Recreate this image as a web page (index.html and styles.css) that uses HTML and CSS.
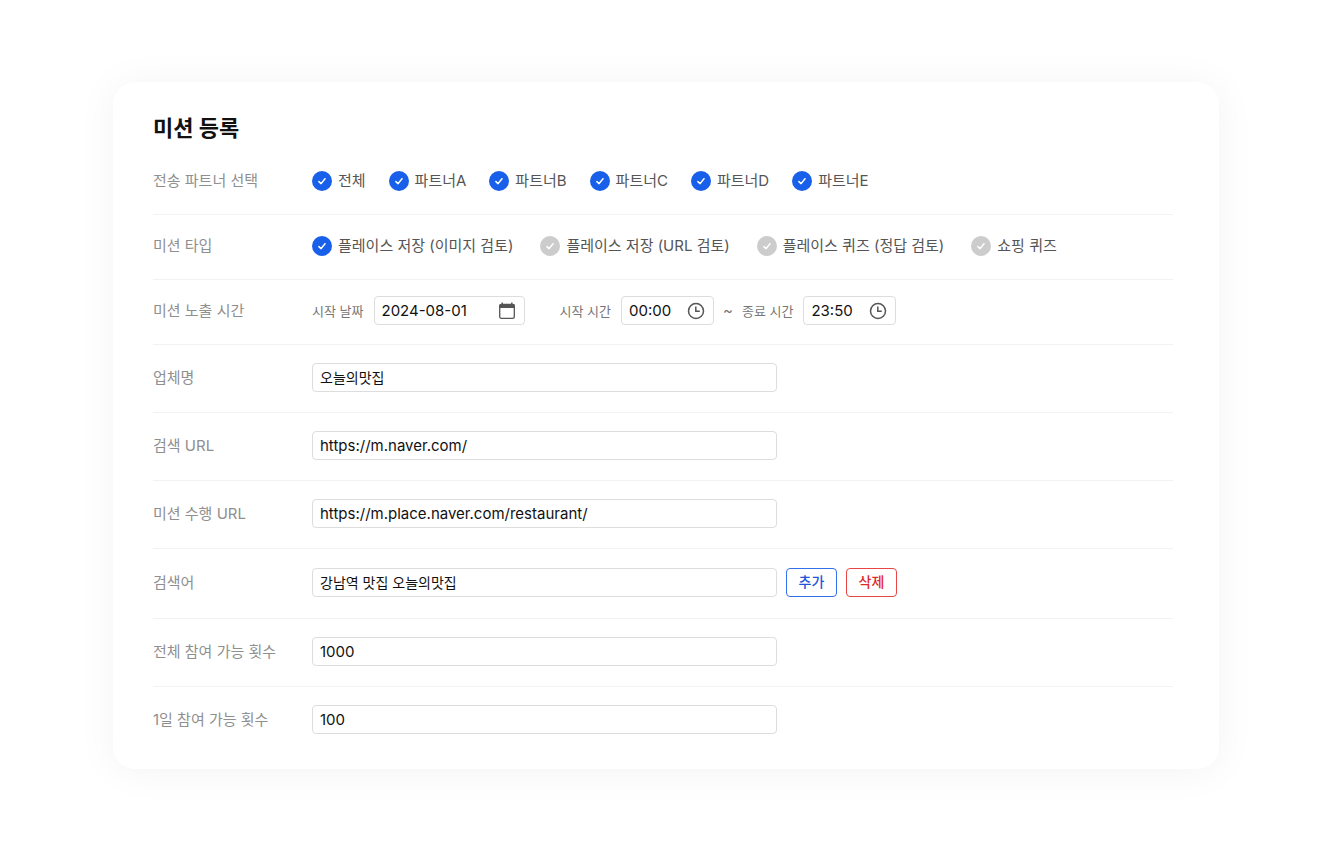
FILE: index.html
```html
<!DOCTYPE html>
<html lang="ko">
<head>
<meta charset="utf-8">
<meta name="viewport" content="width=device-width, initial-scale=1">
<title>미션 등록</title>
<link rel="stylesheet" href="styles.css">
</head>
<body>
<svg class="sprite" aria-hidden="true">
  <symbol id="check" viewBox="0 0 20 20"><path d="M6.9 10.6l2.2 2 3.9-4.9" fill="none" stroke="#fff" stroke-width="1.5" stroke-linecap="round" stroke-linejoin="round"/></symbol>
  <symbol id="calendar" viewBox="0 0 18 18"><path d="M4.2 .6v2M13.8 .6v2" stroke="#555" stroke-width="1.4"/><rect x="1.7" y="2.5" width="14.6" height="13.8" rx="1.6" fill="none" stroke="#555" stroke-width="1.3"/><path d="M1.2 3.6q0-1.6 1.6-1.6h12.4q1.6 0 1.6 1.6v2.3H1.2z" fill="#555"/></symbol>
  <symbol id="clock" viewBox="0 0 18 18"><circle cx="9" cy="9" r="7.5" fill="none" stroke="#555" stroke-width="1.5"/><path d="M8.8 4.4v4.9h4" fill="none" stroke="#555" stroke-width="1.5"/></symbol>
</svg>
<main class="page">
  <form class="card">
    <h1 class="title">미션 등록</h1>

    <div class="row row-compact" role="group" aria-labelledby="partners">
      <span class="label" id="partners">전송 파트너 선택</span>
      <div class="choices">
        <label class="choice"><span class="mark"><input type="checkbox" checked><svg><use href="#check"/></svg></span>전체</label>
        <label class="choice"><span class="mark"><input type="checkbox" checked><svg><use href="#check"/></svg></span>파트너A</label>
        <label class="choice"><span class="mark"><input type="checkbox" checked><svg><use href="#check"/></svg></span>파트너B</label>
        <label class="choice"><span class="mark"><input type="checkbox" checked><svg><use href="#check"/></svg></span>파트너C</label>
        <label class="choice"><span class="mark"><input type="checkbox" checked><svg><use href="#check"/></svg></span>파트너D</label>
        <label class="choice"><span class="mark"><input type="checkbox" checked><svg><use href="#check"/></svg></span>파트너E</label>
      </div>
    </div>

    <div class="row row-compact" role="radiogroup" aria-labelledby="types">
      <span class="label" id="types">미션 타입</span>
      <div class="choices choices-wide">
        <label class="choice"><span class="mark"><input type="radio" name="type" checked><svg><use href="#check"/></svg></span>플레이스 저장 (이미지 검토)</label>
        <label class="choice"><span class="mark"><input type="radio" name="type"><svg><use href="#check"/></svg></span>플레이스 저장 (URL 검토)</label>
        <label class="choice"><span class="mark"><input type="radio" name="type"><svg><use href="#check"/></svg></span>플레이스 퀴즈 (정답 검토)</label>
        <label class="choice"><span class="mark"><input type="radio" name="type"><svg><use href="#check"/></svg></span>쇼핑 퀴즈</label>
      </div>
    </div>

    <div class="row row-compact" role="group" aria-labelledby="exposure">
      <span class="label" id="exposure">미션 노출 시간</span>
      <div class="period">
        <label class="when when-date">시작 날짜
          <span class="picker picker-date"><input type="text" value="2024-08-01"><svg class="picker-icon"><use href="#calendar"/></svg></span>
        </label>
        <label class="when">시작 시간
          <span class="picker"><input type="text" value="00:00"><svg class="picker-icon"><use href="#clock"/></svg></span>
        </label>
        <span class="tilde">~</span>
        <label class="when">종료 시간
          <span class="picker"><input type="text" value="23:50"><svg class="picker-icon"><use href="#clock"/></svg></span>
        </label>
      </div>
    </div>

    <div class="row">
      <label class="label" for="company">업체명</label>
      <input class="field field-ko" id="company" type="text" value="오늘의맛집">
    </div>
    <div class="row">
      <label class="label" for="search-url">검색 URL</label>
      <input class="field" id="search-url" type="url" value="https://m.naver.com/">
    </div>
    <div class="row">
      <label class="label" for="mission-url">미션 수행 URL</label>
      <input class="field" id="mission-url" type="url" value="https://m.place.naver.com/restaurant/">
    </div>
    <div class="row row-actions">
      <label class="label" for="keyword">검색어</label>
      <input class="field field-ko" id="keyword" type="text" value="강남역 맛집 오늘의맛집">
      <div class="actions">
        <button class="button button-add" type="button">추가</button>
        <button class="button button-delete" type="button">삭제</button>
      </div>
    </div>
    <div class="row">
      <label class="label" for="total">전체 참여 가능 횟수</label>
      <input class="field" id="total" type="text" inputmode="numeric" value="1000">
    </div>
    <div class="row">
      <label class="label" for="daily">1일 참여 가능 횟수</label>
      <input class="field" id="daily" type="text" inputmode="numeric" value="100">
    </div>
  </form>
</main>
</body>
</html>
```
FILE: styles.css
```css
* {
  box-sizing: border-box;
}

body {
  margin: 0;
  background: #fff;
  color: #111;
  font-family: Inter, "Noto Sans CJK KR", sans-serif;
  font-size: 15px;
  line-height: 24px;
}

input,
button {
  font: inherit;
  color: inherit;
}

.sprite {
  display: none;
}

.page {
  padding: 82px 110px 84px 113px;
}

.card {
  padding: 30px 46px 15px 40px;
  border-radius: 22px;
  background: #fff;
  box-shadow: 0 2px 40px rgba(0, 0, 0, 0.05);
}

.title {
  margin: 0 0 6px;
  font-size: 22px;
  font-weight: 700;
  line-height: 32px;
}

.row {
  display: flex;
  align-items: center;
  padding: 18px 0 20px;
  border-bottom: 1px solid #f2f2f2;
}

.row:last-child {
  border-bottom: 0;
}

.row-compact {
  padding: 16px 0 19px;
}

.row-actions {
  padding: 19px 0 21px;
}

.label {
  flex: none;
  width: 159px;
  color: #8f8f8f;
}

.choices {
  display: flex;
  flex-wrap: wrap;
  align-items: center;
  gap: 23px;
  min-height: 29px;
}

.choices-wide {
  gap: 27px;
}

.choice {
  display: flex;
  align-items: center;
  gap: 6px;
  color: #555;
}

.mark {
  display: grid;
  width: 20px;
  height: 20px;
}

.mark input,
.mark svg {
  grid-area: 1 / 1;
  width: 20px;
  height: 20px;
  margin: 0;
}

.mark svg {
  z-index: 1;
  pointer-events: none;
}

.mark input {
  appearance: none;
  border-radius: 50%;
  background: #ccc;
}

.mark input:checked {
  background: #1860ea;
}

.period {
  display: flex;
  flex-wrap: wrap;
  align-items: center;
  gap: 9px;
}

.when {
  display: flex;
  align-items: center;
  gap: 10px;
  color: #777;
  font-size: 13px;
}

.when-date {
  margin-right: 26px;
}

.tilde {
  color: #777;
}

.picker {
  display: flex;
  align-items: center;
  width: 93px;
  height: 29px;
  padding: 0 8px 0 7px;
  border: 1px solid #ddd;
  border-radius: 4px;
  color: #111;
  font-size: 15px;
}

.picker-date {
  width: 151px;
}

.picker input {
  flex: 1;
  min-width: 0;
  padding: 0;
  border: 0;
  background: none;
}

.picker-icon {
  flex: none;
  width: 18px;
  height: 18px;
}

.field {
  flex: 0 1 465px;
  min-width: 0;
  height: 29px;
  padding: 0 7px;
  border: 1px solid #ddd;
  border-radius: 4px;
  background: #fff;
}

.field-ko {
  padding-bottom: 2px;
  font-size: 14px;
}

.actions {
  display: flex;
  gap: 9px;
  margin-left: 9px;
}

.button {
  width: 51px;
  height: 29px;
  padding: 0 0 2px;
  border: 1px solid;
  border-radius: 4px;
  background: #fff;
  font-size: 14px;
  font-weight: 500;
  line-height: 24px;
}

.button-add {
  border-color: #3370ea;
  color: #1f55d8;
}

.button-delete {
  border-color: #e84545;
  color: #df2828;
}
```
